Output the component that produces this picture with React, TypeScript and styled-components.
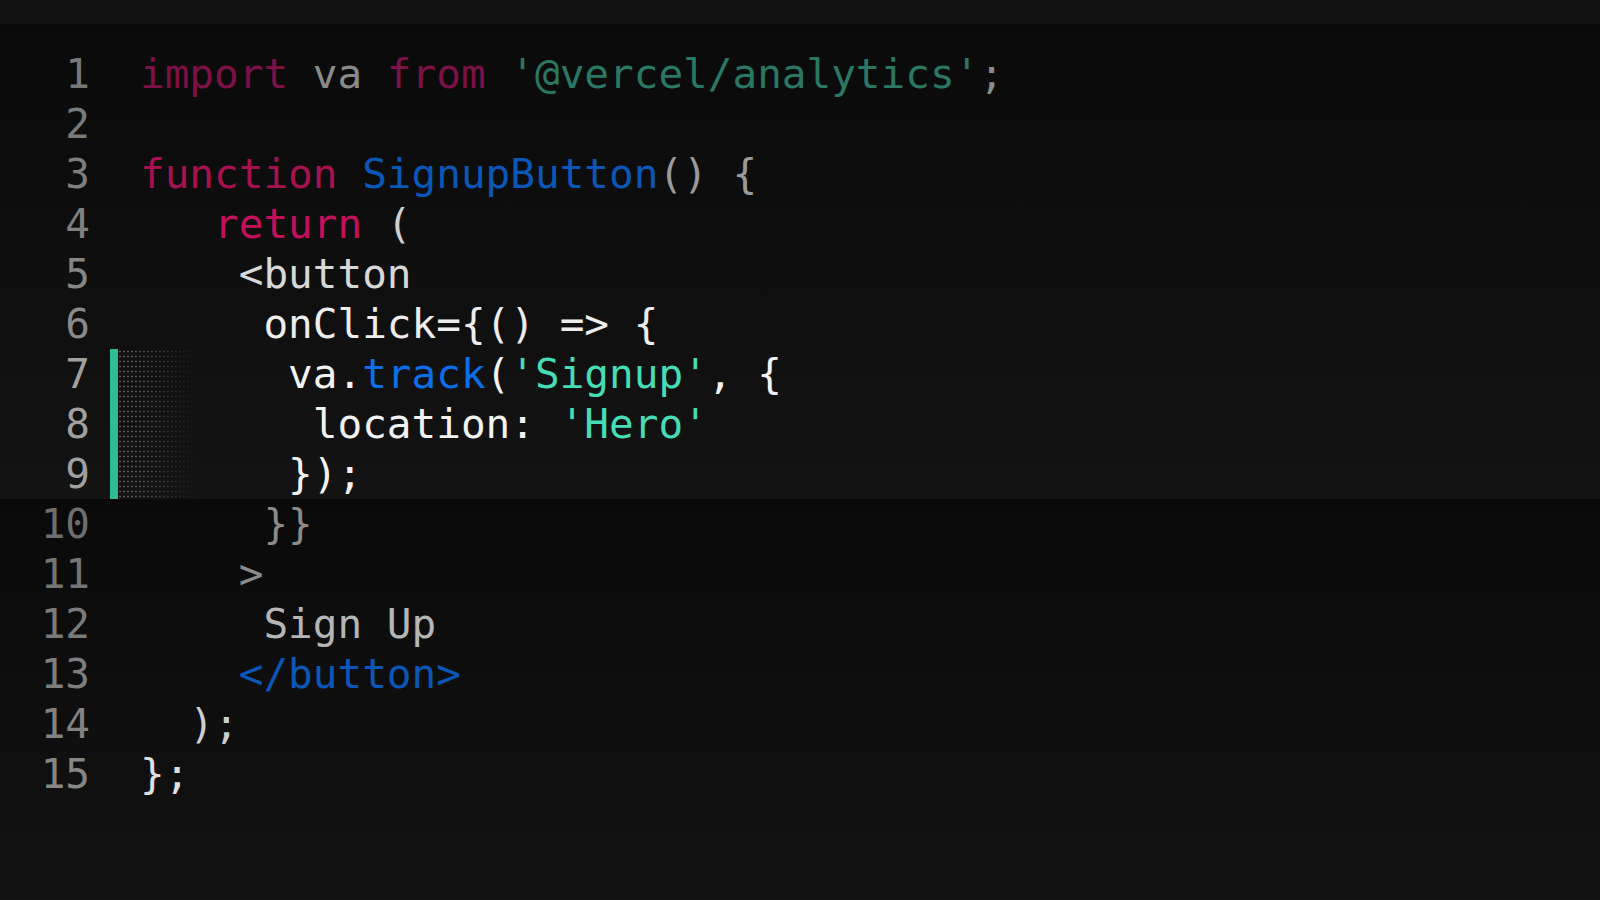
import React from "react";
import styled, { createGlobalStyle } from "styled-components";

const Global = createGlobalStyle`
  html, body { margin: 0; padding: 0; background: #0a0a0a; }
  body { width: 1600px; height: 900px; overflow: hidden; }
`;

const Page = styled.div`
  display: flex;
  flex-direction: column;
  width: 1600px;
  height: 900px;
  font-family: "DejaVu Sans Mono", "Liberation Mono", monospace;
  font-size: 41px;
`;

const TopBar = styled.div`
  flex: none;
  height: 24px;
  background: #121212;
`;

const SectionA = styled.section`
  flex: none;
  padding-top: 25px;
  background: linear-gradient(#0a0a0a, #131313);
`;

const SectionB = styled.section`
  flex: 1;
  background: linear-gradient(#0a0a0a, #121212);
`;

const Focus = styled.div`
  position: relative;
  &::before {
    content: "";
    position: absolute;
    left: 118px;
    top: 0;
    bottom: 0;
    width: 78px;
    background-image: radial-gradient(circle, rgba(255, 255, 255, 0.3) 0.8px, transparent 1.2px);
    background-size: 4px 5px;
    -webkit-mask-image: linear-gradient(to right, #000 20%, transparent);
    mask-image: linear-gradient(to right, #000 20%, transparent);
    pointer-events: none;
  }
`;

const Row = styled.div`
  display: flex;
  align-items: stretch;
  height: 50px;
  line-height: 50px;
`;

const LineNo = styled.span<{ $c: string }>`
  width: 90px;
  text-align: right;
  color: ${(p) => p.$c};
  flex: none;
`;

const Marker = styled.span<{ $on?: boolean }>`
  flex: none;
  width: 8px;
  margin-left: 20px;
  background: ${(p) => (p.$on ? "#2fbb96" : "transparent")};
`;

const Code = styled.code`
  padding-left: 22px;
  white-space: pre;
  font-family: inherit;
  font-size: inherit;
  position: relative;
`;

const Tok = styled.span<{ $c: string }>`
  color: ${(p) => p.$c};
`;

type T = [string, string];
type Line = { n: number; num: string; toks: T[] };

const PINK1 = "#7c1147";
const PINK3 = "#a8104f";
const PINK4 = "#c4105a";
const BLUE_DIM = "#0b57b8";
const BLUE = "#0a6fe8";
const TEAL_DIM = "#2a7763";
const TEAL = "#45dcb6";

const top: Line[] = [
  {
    n: 1,
    num: "#777777",
    toks: [
      ["import", PINK1],
      [" va ", "#8a8a8a"],
      ["from", PINK1],
      [" ", "#8a8a8a"],
      ["'@vercel/analytics'", TEAL_DIM],
      [";", "#8a8a8a"],
    ],
  },
  { n: 2, num: "#7a7a7a", toks: [] },
  {
    n: 3,
    num: "#7d7d7d",
    toks: [
      ["function", PINK3],
      [" ", "#9a9a9a"],
      ["SignupButton", BLUE_DIM],
      ["() {", "#9a9a9a"],
    ],
  },
  { n: 4, num: "#808080", toks: [["   ", "#ccc"], ["return", PINK4], [" (", "#cfcfcf"]] },
  { n: 5, num: "#858585", toks: [["    <button", "#d8d8d8"]] },
  { n: 6, num: "#8a8a8a", toks: [["     onClick={() => {", "#ededed"]] },
];

const focus: Line[] = [
  {
    n: 7,
    num: "#a0a0a0",
    toks: [
      ["      va.", "#f2f2f2"],
      ["track", BLUE],
      ["(", "#f2f2f2"],
      ["'Signup'", TEAL],
      [", {", "#f2f2f2"],
    ],
  },
  {
    n: 8,
    num: "#a0a0a0",
    toks: [
      ["       location: ", "#f2f2f2"],
      ["'Hero'", TEAL],
    ],
  },
  { n: 9, num: "#a0a0a0", toks: [["      });", "#f2f2f2"]] },
];

const bottom: Line[] = [
  { n: 10, num: "#6e6e6e", toks: [["     }}", "#8a8a8a"]] },
  { n: 11, num: "#747474", toks: [["    >", "#8a8a8a"]] },
  { n: 12, num: "#7a7a7a", toks: [["     Sign Up", "#b5b5b5"]] },
  { n: 13, num: "#7e7e7e", toks: [["    </button>", BLUE_DIM]] },
  { n: 14, num: "#828282", toks: [["  );", "#cfcfcf"]] },
  { n: 15, num: "#868686", toks: [["};", "#e0e0e0"]] },
];

function CodeRow({ line, on }: { line: Line; on?: boolean }) {
  return (
    <Row>
      <LineNo $c={line.num}>{line.n}</LineNo>
      <Marker $on={on} />
      <Code>
        {line.toks.map(([t, c], i) => (
          <Tok key={i} $c={c}>
            {t}
          </Tok>
        ))}
      </Code>
    </Row>
  );
}

export default function App() {
  return (
    <Page>
      <Global />
      <TopBar />
      <SectionA>
        {top.map((l) => (
          <CodeRow key={l.n} line={l} />
        ))}
        <Focus>
          {focus.map((l) => (
            <CodeRow key={l.n} line={l} on />
          ))}
        </Focus>
      </SectionA>
      <SectionB>
        {bottom.map((l) => (
          <CodeRow key={l.n} line={l} />
        ))}
      </SectionB>
    </Page>
  );
}
